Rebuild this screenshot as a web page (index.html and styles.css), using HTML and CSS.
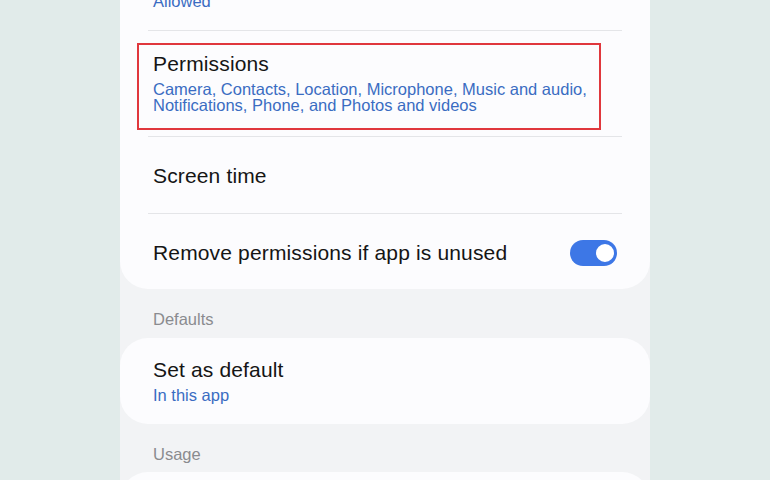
FILE: index.html
```html
<!DOCTYPE html>
<html lang="en">
  <head>
    <meta charset="UTF-8" />
    <title>App info</title>
    <link rel="stylesheet" href="styles.css">
  </head>
  <body>
    <div class="panel">
      <div class="card card-first">
        <div class="row">
          <div class="title">Notifications</div>
          <div class="sub">Allowed</div>
        </div>

        <div class="row row-marked">
          <div class="title">Permissions</div>
          <div class="sub">
            Camera, Contacts, Location, Microphone, Music and audio,<br />
            Notifications, Phone, and Photos and videos
          </div>
          <span class="marker"></span>
        </div>

        <div class="row row-single">
          <div class="title">Screen time</div>
        </div>

        <div class="row row-single row-toggle">
          <div class="title">Remove permissions if app is unused</div>
          <span class="toggle on"><span class="knob"></span></span>
        </div>
      </div>

      <div class="label">Defaults</div>

      <div class="card">
        <div class="row">
          <div class="title">Set as default</div>
          <div class="sub">In this app</div>
        </div>
      </div>

      <div class="label">Usage</div>

      <div class="card">
        <div class="row">
          <div class="title">Mobile data</div>
          <div class="sub">0 B used since last month</div>
        </div>
      </div>
    </div>
  </body>
</html>
```

FILE: styles.css
```css
html, body {
    margin: 0;
    height: 100%;
    overflow: hidden;
}

body {
    font-family: 'Liberation Sans', Arial, sans-serif;
    background-color: #e1ebea;
    color: #151515;
}

.panel {
    width: 530px;
    margin: 0 auto;
    min-height: 100%;
    background-color: #f2f3f5;
}

.card {
    background-color: #fcfcfe;
    border-radius: 28px;
}

/* page is scrolled, first row is mostly off screen */
.card-first {
    margin-top: -56px;
    border-radius: 0 0 28px 28px;
}

.row {
    position: relative;
    margin: 0 28px;
    padding: 20px 5px 21px;
}

.row + .row {
    border-top: 1px solid #e4e5e8;
}

.row-marked {
    padding-top: 21px;
    padding-bottom: 23px;
}

.row-single {
    padding: 27px 5px 25px;
}

.row-toggle {
    display: flex;
    align-items: center;
    justify-content: space-between;
    padding-top: 26px;
    padding-bottom: 23px;
}

.title {
    font-size: 21px;
    line-height: 24px;
    letter-spacing: 0.15px;
}

.sub {
    font-size: 16.5px;
    line-height: 16px;
    color: #3a6cc2;
    margin-top: 5px;
}

.marker {
    position: absolute;
    top: 12px;
    left: -11px;
    width: 460px;
    height: 83px;
    border: 2px solid #e0373d;
}

.toggle {
    display: flex;
    align-items: center;
    justify-content: flex-end;
    width: 47px;
    height: 26px;
    padding: 0 2px;
    box-sizing: border-box;
    border-radius: 13px;
    background-color: #3d77e6;
}

.knob {
    width: 18px;
    height: 18px;
    border-radius: 50%;
    background-color: #fff;
    border: 2px solid #3d77e6;
    box-sizing: content-box;
    margin-right: -1px;
}

.label {
    font-size: 16.5px;
    line-height: 20px;
    color: #8a8b8f;
    padding: 20px 33px 9px;
}

.label + .card + .label {
    padding-bottom: 8px;
}
```
